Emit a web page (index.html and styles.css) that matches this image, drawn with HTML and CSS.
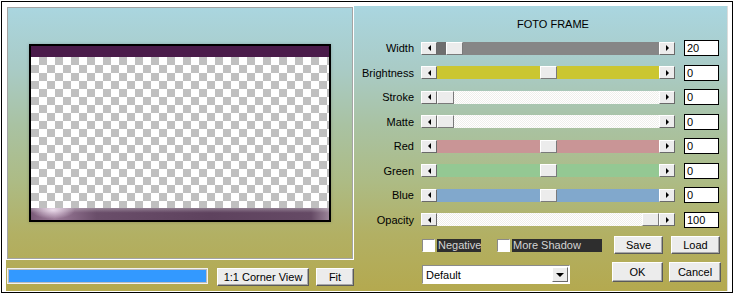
FILE: index.html
```html
<!DOCTYPE html>
<html lang="en">
<head>
    <meta charset="UTF-8">
    <title>Foto Frame</title>
    <link rel="stylesheet" href="styles.css">
</head>
<body>
    <div class="window">
        <div class="dialog">
            <div class="left">
                <div class="preview">
                    <div class="frame">
                        <div class="frame-top"></div>
                        <div class="checker"></div>
                        <div class="frame-bottom"></div>
                    </div>
                </div>
                <div class="left-bar">
                    <div class="progress"><div class="progress-fill"></div></div>
                    <div class="btn btn-corner">1:1 Corner View</div>
                    <div class="btn btn-fit">Fit</div>
                </div>
            </div>

            <div class="right">
                <div class="title">FOTO FRAME</div>

                <div class="sliders">
                    <div class="row">
                        <div class="row-label">Width</div>
                        <div class="scroll">
                            <span class="arrow arrow-left"></span>
                            <div class="track track-gray"><span class="trail" style="width: 9px"></span><span class="thumb"></span></div>
                            <span class="arrow arrow-right"></span>
                        </div>
                        <div class="value">20</div>
                    </div>
                    <div class="row">
                        <div class="row-label">Brightness</div>
                        <div class="scroll">
                            <span class="arrow arrow-left"></span>
                            <div class="track track-yellow"><span class="thumb" style="margin-left: 103px"></span></div>
                            <span class="arrow arrow-right"></span>
                        </div>
                        <div class="value">0</div>
                    </div>
                    <div class="row">
                        <div class="row-label">Stroke</div>
                        <div class="scroll">
                            <span class="arrow arrow-left"></span>
                            <div class="track track-white"><span class="thumb"></span></div>
                            <span class="arrow arrow-right"></span>
                        </div>
                        <div class="value">0</div>
                    </div>
                    <div class="row">
                        <div class="row-label">Matte</div>
                        <div class="scroll">
                            <span class="arrow arrow-left"></span>
                            <div class="track track-white"><span class="thumb"></span></div>
                            <span class="arrow arrow-right"></span>
                        </div>
                        <div class="value">0</div>
                    </div>
                    <div class="row">
                        <div class="row-label">Red</div>
                        <div class="scroll">
                            <span class="arrow arrow-left"></span>
                            <div class="track track-red"><span class="thumb" style="margin-left: 103px"></span></div>
                            <span class="arrow arrow-right"></span>
                        </div>
                        <div class="value">0</div>
                    </div>
                    <div class="row">
                        <div class="row-label">Green</div>
                        <div class="scroll">
                            <span class="arrow arrow-left"></span>
                            <div class="track track-green"><span class="thumb" style="margin-left: 103px"></span></div>
                            <span class="arrow arrow-right"></span>
                        </div>
                        <div class="value">0</div>
                    </div>
                    <div class="row">
                        <div class="row-label">Blue</div>
                        <div class="scroll">
                            <span class="arrow arrow-left"></span>
                            <div class="track track-blue"><span class="thumb" style="margin-left: 103px"></span></div>
                            <span class="arrow arrow-right"></span>
                        </div>
                        <div class="value">0</div>
                    </div>
                    <div class="row">
                        <div class="row-label">Opacity</div>
                        <div class="scroll">
                            <span class="arrow arrow-left"></span>
                            <div class="track track-white"><span class="thumb" style="margin-left: 205px"></span></div>
                            <span class="arrow arrow-right"></span>
                        </div>
                        <div class="value">100</div>
                    </div>
                </div>

                <div class="actions">
                    <span class="checkbox"></span>
                    <span class="check-label label-negative">Negative</span>
                    <span class="checkbox checkbox-second"></span>
                    <span class="check-label label-shadow">More Shadow</span>
                    <div class="btn btn-save">Save</div>
                    <div class="btn btn-load">Load</div>
                </div>

                <div class="actions actions-bottom">
                    <div class="select">
                        <span class="select-text">Default</span>
                        <span class="select-arrow"></span>
                    </div>
                    <div class="btn btn-ok">OK</div>
                    <div class="btn btn-cancel">Cancel</div>
                </div>
            </div>
        </div>
    </div>
</body>
</html>
```

FILE: styles.css
```css
body {
    margin: 0;
    background: #fff;
    font-family: "Liberation Sans", Arial, sans-serif;
    font-size: 11px;
    color: #000;
}
.window {
    width: 732px;
    height: 292px;
    box-sizing: border-box;
    margin: 1px;
    padding: 4px 4px 1px 4px;
    border: 1px solid #000;
    background: #fff;
}
.dialog {
    display: flex;
    height: 100%;
    background: linear-gradient(#aad6e0 0%, #a9cbc6 22%, #a9c2a2 42%, #adbb84 62%, #b2b064 80%, #b4a94f 100%);
}

/* preview side */
.left {
    width: 349px;
    display: flex;
    flex-direction: column;
}
.preview {
    width: 348px;
    height: 254px;
    box-sizing: border-box;
    border: 1px solid #fff;
    box-shadow: inset 0 0 0 1px #a4a4a4;
    display: flex;
    align-items: center;
    justify-content: center;
}
.frame {
    width: 302px;
    height: 178px;
    box-sizing: border-box;
    border: 2px solid #000;
    display: flex;
    flex-direction: column;
    box-shadow: 0 0 3px rgba(0, 0, 0, 0.2);
}
.frame-top {
    height: 11px;
    background: #4a1b4a;
}
.checker {
    flex: 1;
    background: repeating-conic-gradient(#c0c0c0 0 25%, #fff 0 50%) 0 0 / 16px 16px;
}
.frame-bottom {
    height: 12px;
    background:
        radial-gradient(ellipse 22px 9px at 22px 2px, rgba(240, 225, 240, 0.9), rgba(240, 225, 240, 0) 100%),
        linear-gradient(rgba(255, 255, 255, 0.3), rgba(255, 255, 255, 0) 40%),
        linear-gradient(to right, #7a5a78, #9c7c9a 8%, #6a4e6a 22%, #5e425e 60%, #654a65 94%, #9a8498);
}
.left-bar {
    display: flex;
    align-items: flex-start;
    margin-top: 8px;
}
.progress {
    width: 201px;
    height: 16px;
    margin-left: 1px;
    box-sizing: border-box;
    border: 1px solid #f2f2f2;
    padding: 1px;
    box-shadow: inset 0 0 0 1px #bcbcbc;
}
.progress-fill {
    height: 100%;
    background: #3399ff;
}

/* buttons */
.btn {
    box-sizing: border-box;
    height: 18px;
    line-height: 16px;
    text-align: center;
    background: #ececec;
    border: 1px solid;
    border-color: #fff #5a5a5a #5a5a5a #fff;
    box-shadow: inset -1px -1px 0 #a8a8a8;
}
.btn-corner {
    width: 92px;
    margin-left: 9px;
}
.btn-fit {
    width: 38px;
    margin-left: 7px;
}

/* controls side */
.right {
    width: 372px;
    border-right: 1px solid #dcdcdc;
}
.title {
    height: 30px;
    box-sizing: border-box;
    padding: 11px 0 0 24px;
    line-height: 14px;
    text-align: center;
}
.row {
    display: flex;
    align-items: center;
    height: 24.5px;
}
.row-label {
    width: 59px;
    margin-right: 7px;
    text-align: right;
}
.scroll {
    display: flex;
    width: 254px;
    height: 13px;
}
.arrow {
    width: 16px;
    height: 13px;
    box-sizing: border-box;
    background: #ececec;
    border: 1px solid;
    border-color: #fff #6a6a6a #6a6a6a #fff;
    display: flex;
    align-items: center;
    justify-content: center;
}
.arrow::after {
    content: "";
    border-top: 3px solid transparent;
    border-bottom: 3px solid transparent;
}
.arrow-left::after {
    border-right: 3px solid #000;
}
.arrow-right::after {
    border-left: 3px solid #000;
}
.track {
    flex: 1;
    display: flex;
}
.track-gray { background: #868686; }
.track-yellow { background: #cbc631; }
.track-red { background: #c99596; }
.track-green { background: #94c893; }
.track-blue { background: #81a8cc; }
.track-white {
    background: repeating-conic-gradient(#fff 0 25%, #efefeb 0 50%) 0 0 / 2px 2px;
}
.trail {
    background: #6e6e6e;
}
.thumb {
    width: 17px;
    height: 13px;
    box-sizing: border-box;
    background: #ececec;
    border: 1px solid;
    border-color: #fff #7a7a7a #7a7a7a #fff;
}
.value {
    width: 35px;
    height: 16px;
    margin-left: 9px;
    box-sizing: border-box;
    border: 1px solid #000;
    background: #fff;
    padding-left: 2px;
    line-height: 14px;
}

/* bottom area */
.actions {
    display: flex;
    align-items: center;
    height: 18px;
    margin-top: 4px;
    padding-left: 67px;
}
.checkbox {
    width: 13px;
    height: 13px;
    box-sizing: border-box;
    background: #fff;
    border: 1px solid;
    border-color: #8a8a8a #fff #fff #8a8a8a;
}
.checkbox-second {
    margin-left: 16px;
}
.check-label {
    height: 13px;
    line-height: 13px;
    margin-left: 2px;
    background: #2e2e2e;
    color: #d4d4d4;
    padding-left: 1px;
    box-sizing: border-box;
}
.label-negative { width: 44px; }
.label-shadow { width: 90px; }
.btn-save {
    width: 49px;
    margin-left: 12px;
}
.btn-load {
    width: 49px;
    margin-left: 8px;
}
.actions-bottom {
    align-items: flex-start;
    height: 22px;
    margin-top: 8px;
}
.select {
    width: 148px;
    height: 19px;
    margin-top: 3px;
    box-sizing: border-box;
    background: #fff;
    border: 1px solid;
    border-color: #8a8a8a #fff #fff #8a8a8a;
    display: flex;
    align-items: center;
    justify-content: space-between;
}
.select-text {
    padding-left: 3px;
}
.select-arrow {
    width: 16px;
    height: 15px;
    margin-right: 1px;
    box-sizing: border-box;
    background: #ececec;
    border: 1px solid;
    border-color: #fff #6a6a6a #6a6a6a #fff;
    display: flex;
    align-items: center;
    justify-content: center;
}
.select-arrow::after {
    content: "";
    border-left: 4px solid transparent;
    border-right: 4px solid transparent;
    border-top: 4px solid #000;
}
.btn-ok {
    width: 51px;
    height: 20px;
    line-height: 18px;
    margin-left: 42px;
}
.btn-cancel {
    width: 52px;
    height: 20px;
    line-height: 18px;
    margin-left: 6px;
}
```
